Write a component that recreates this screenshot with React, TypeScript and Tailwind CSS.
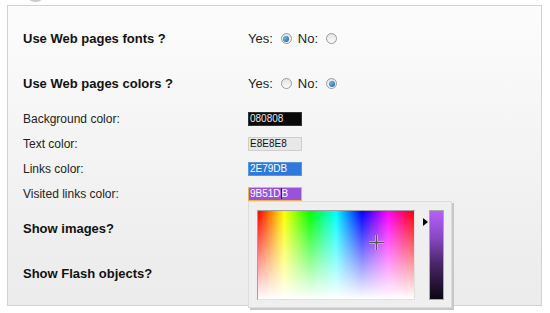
import React from "react";

const font = { fontFamily: '"Liberation Sans", Arial, sans-serif' };

function Radio({ checked }: { checked?: boolean }) {
  return (
    <span className="flex h-[11px] w-[11px] items-center justify-center rounded-full border border-[#9a9a9a] bg-linear-to-b from-[#e4e4e4] to-[#fbfbfb]">
      {checked && (
        <span className="h-[6px] w-[6px] rounded-full bg-radial-[at_35%_35%] from-[#6fb6ea] to-[#0f5a92]" />
      )}
    </span>
  );
}

function YesNo({ yes }: { yes: boolean }) {
  return (
    <div className="flex items-center text-[13px] text-[#222]">
      <span>Yes:</span>
      <span className="ml-[8px]"><Radio checked={yes} /></span>
      <span className="ml-[6px]">No:</span>
      <span className="ml-[8px]"><Radio checked={!yes} /></span>
    </div>
  );
}

function Crosshair() {
  return (
    <svg width="15" height="15" viewBox="0 0 15 15" className="absolute left-[111px] top-[24px]">
      <path d="M7.5 0v15M0 7.5h15" stroke="#fff" strokeWidth="3" opacity="0.6" />
      <path d="M7.5 0v15M0 7.5h15" stroke="#555" strokeWidth="1.4" />
    </svg>
  );
}

function ColorPicker() {
  return (
    <div className="absolute left-0 top-full z-10 flex h-[107px] w-[204px] border border-[#dcdcdc] bg-[#efefef] pl-[8px] pt-[8px] shadow-[2px_2px_0_#c8c8c8]">
      <div className="relative h-[90px] w-[158px] border border-[#a0a0a0] border-r-[#e0e0e0] border-b-[#e0e0e0] bg-[linear-gradient(to_bottom,rgba(255,255,255,0),#fff),linear-gradient(to_right,#f00,#ff0,#0f0,#0ff,#00f,#f0f,#f00)]">
        <Crosshair />
      </div>
      <div className="ml-[8px] mt-[8px] h-0 w-0 border-y-[4px] border-l-[5px] border-y-transparent border-l-black" />
      <div className="ml-[1px] h-[90px] w-[15px] border border-[#a8a8a8] bg-[linear-gradient(to_bottom,#b561f7,#8a47c4_30%,#4a2668_60%,#0c0612)]" />
    </div>
  );
}

function ColorInput({
  value,
  cls,
  caret,
  picker,
}: {
  value: string;
  cls: string;
  caret?: boolean;
  picker?: boolean;
}) {
  return (
    <div className="relative">
      <div className={`flex h-[14px] w-[54px] items-center border pl-[1px] text-[10px] leading-none ${cls}`}>
        {caret ? (
          <>
            {value.slice(0, 5)}
            <span className="h-[11px] w-px bg-[#222]" />
            {value.slice(5)}
          </>
        ) : (
          value
        )}
      </div>
      {picker && <ColorPicker />}
    </div>
  );
}

function Row({ label, bold, mt, children }: { label: string; bold?: boolean; mt: string; children?: React.ReactNode }) {
  return (
    <div className={`flex h-[25px] items-center ${mt}`}>
      <div className={`w-[225px] ${bold ? "text-[13px] font-bold text-[#111]" : "text-[12px] text-[#222]"}`}>{label}</div>
      {children}
    </div>
  );
}

export default function App() {
  return (
    <div className="h-[313px] w-[550px] overflow-hidden bg-white" style={font}>
      <div className="h-[5px] overflow-hidden">
        <div className="-mt-[16px] ml-[26px] h-[18px] w-[19px] rounded-full bg-[#b5b5b5] opacity-70" />
      </div>
      <div className="ml-[7px] h-[301px] w-[535px] border border-[#d2d2d2] bg-linear-to-b from-[#fcfcfc] to-[#ebebeb] pl-[15px] pt-[20px]">
        <Row label="Use Web pages fonts ?" bold mt="mt-0">
          <YesNo yes />
        </Row>
        <Row label="Use Web pages colors ?" bold mt="mt-[20px]">
          <YesNo yes={false} />
        </Row>
        <Row label="Background color:" mt="mt-[10px]">
          <ColorInput value="080808" cls="border-[#333] bg-[#080808] text-[#e8e8e8]" />
        </Row>
        <Row label="Text color:" mt="mt-0">
          <ColorInput value="E8E8E8" cls="border-[#cfcfcf] bg-[#e8e8e8] text-[#111]" />
        </Row>
        <Row label="Links color:" mt="mt-0">
          <ColorInput value="2E79DB" cls="border-[#5a95e0] bg-[#2e79db] text-white" />
        </Row>
        <Row label="Visited links color:" mt="mt-0">
          <ColorInput value="9B51DB" cls="border-[#e9b54e] bg-[#9b51db] text-white" caret picker />
        </Row>
        <Row label="Show images?" bold mt="mt-[10px]" />
        <Row label="Show Flash objects?" bold mt="mt-[20px]" />
      </div>
    </div>
  );
}
